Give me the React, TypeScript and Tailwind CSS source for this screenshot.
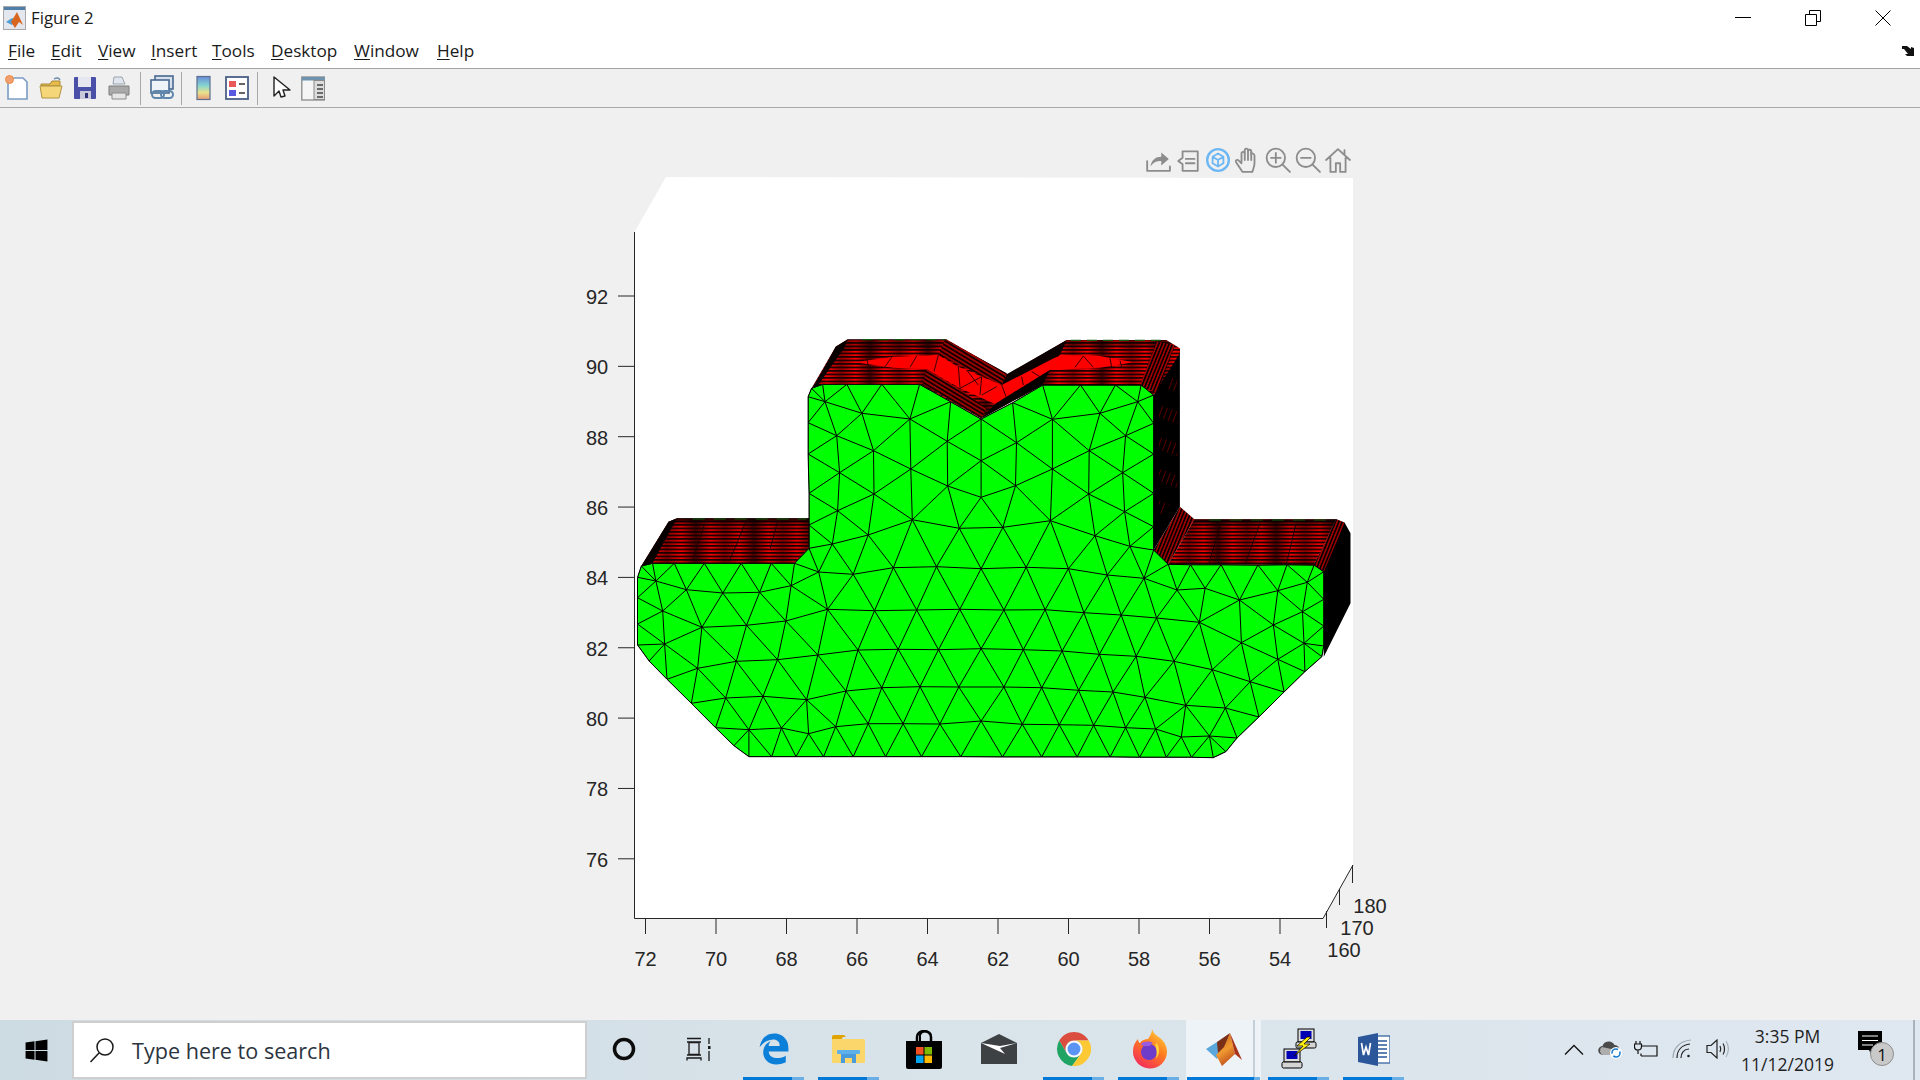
import React from "react";
import { FaEdgeLegacy, FaWindows } from "react-icons/fa";

type Pt = [number, number];
const P = (u: number, v: number): Pt => [620 + u / 2.063, 480 + v / 3];
const Z = (x: number, y: number): Pt => [810 + x / 3, 330 + y / 3];
const str = (a: Pt[]) => a.map((p) => `${p[0].toFixed(1)},${p[1].toFixed(1)}`).join(" ");
const U = (a: number[][]) => a.map(([u, v]) => P(u, v));
const ZZ = (a: number[][]) => a.map(([u, v]) => Z(u, v));

const outlineRaw = [
  [388, -250], [395, -275], [418, -287], [468, -287], [540, -287], [618, -287], [682, -235], [745, -183], [810, -232], [872, -285], [950, -285], [1022, -285], [1075, -285], [1101, -255],
  [1101, -170], [1101, -78], [1101, 40], [1101, 140], [1101, 210], [1131, 253], [1177, 254], [1240, 254], [1316, 255], [1376, 254], [1432, 255], [1452, 275], [1452, 358], [1452, 438], [1452, 498], [1448, 530],
  [1413, 575], [1370, 636], [1318, 711], [1273, 774], [1250, 815], [1224, 833], [1179, 832], [1127, 832], [1072, 832], [1011, 831], [943, 831], [870, 831], [789, 831], [703, 830], [622, 830], [548, 830], [481, 830], [420, 830], [363, 830], [313, 830], [266, 830],
  [235, 797], [197, 743], [147, 670], [97, 598], [60, 543], [36, 495], [36, 432], [36, 353], [36, 292], [44, 258], [67, 250], [112, 250], [174, 250], [250, 250], [312, 250], [360, 250], [390, 205], [390, 135], [390, 40], [388, -78], [388, -172],
];
const interiorRaw = [
  [266, 749], [333, 744], [389, 761], [445, 740], [512, 731], [584, 731], [660, 732], [745, 723], [830, 733], [906, 734], [977, 736], [1043, 743], [1105, 747], [1158, 771], [1216, 768],
  [218, 654], [295, 649], [385, 659], [466, 633], [540, 623], [619, 620], [699, 621], [792, 621], [870, 623], [946, 631], [1017, 636], [1083, 652], [1167, 676], [1249, 684],
  [160, 565], [240, 544], [325, 539], [408, 525], [491, 510], [574, 508], [657, 509], [745, 506], [832, 509], [912, 513], [989, 523], [1065, 529], [1143, 544], [1222, 569], [1300, 605], [1357, 538], [1411, 490],
  [92, 492], [169, 442], [261, 436], [342, 423], [428, 388], [525, 392], [612, 390], [701, 388], [792, 390], [877, 389], [957, 398], [1034, 405], [1107, 414], [1195, 427], [1282, 488], [1348, 435], [1408, 395],
  [88, 393], [74, 303], [137, 329], [212, 339], [288, 337], [353, 317], [410, 276], [481, 283], [564, 263], [653, 260], [745, 266], [838, 262], [925, 266], [1005, 285], [1081, 295], [1149, 330], [1207, 325], [1278, 360], [1357, 332], [1418, 307],
  [438, 192], [512, 165], [603, 119], [700, 145], [790, 142], [888, 122], [980, 167], [1052, 199],
  [449, 92], [524, 42], [676, 18], [745, 52], [816, 17], [967, 42], [1041, 95],
  [453, -22], [600, -33], [745, -58], [892, -33], [1037, -22],
  [523, -88], [675, -116], [818, -112], [968, -88],
  [447, -133], [1043, -133], [598, -183], [892, -182], [499, -200], [990, -200], [423, -235], [1068, -235],
];
const outline = U(outlineRaw);

function inPoly(p: Pt, poly: Pt[]) {
  let c = false;
  for (let i = 0, j = poly.length - 1; i < poly.length; j = i++) {
    const [xi, yi] = poly[i];
    const [xj, yj] = poly[j];
    if (yi > p[1] !== yj > p[1] && p[0] < ((xj - xi) * (p[1] - yi)) / (yj - yi) + xi) c = !c;
  }
  return c;
}

function meshPath() {
  const pts: Pt[] = [...outline, ...U(interiorRaw)];
  const n = pts.length;
  const all: Pt[] = [...pts, [-5000, -5000], [8000, -5000], [1000, 9000]];
  let tris: number[][] = [[n, n + 1, n + 2]];
  const inCirc = (t: number[], p: Pt) => {
    const [a, b, c] = t.map((i) => all[i]);
    const d = 2 * (a[0] * (b[1] - c[1]) + b[0] * (c[1] - a[1]) + c[0] * (a[1] - b[1]));
    if (Math.abs(d) < 1e-9) return false;
    const a2 = a[0] * a[0] + a[1] * a[1];
    const b2 = b[0] * b[0] + b[1] * b[1];
    const c2 = c[0] * c[0] + c[1] * c[1];
    const x = (a2 * (b[1] - c[1]) + b2 * (c[1] - a[1]) + c2 * (a[1] - b[1])) / d;
    const y = (a2 * (c[0] - b[0]) + b2 * (a[0] - c[0]) + c2 * (b[0] - a[0])) / d;
    return (p[0] - x) ** 2 + (p[1] - y) ** 2 < (a[0] - x) ** 2 + (a[1] - y) ** 2;
  };
  for (let i = 0; i < n; i++) {
    const bad = tris.filter((t) => inCirc(t, all[i]));
    const count = new Map<string, number>();
    bad.forEach((t) =>
      [[t[0], t[1]], [t[1], t[2]], [t[2], t[0]]].forEach(([a, b]) => {
        const k = a < b ? `${a}_${b}` : `${b}_${a}`;
        count.set(k, (count.get(k) || 0) + 1);
      })
    );
    tris = tris.filter((t) => !bad.includes(t));
    count.forEach((v, k) => {
      if (v === 1) {
        const [a, b] = k.split("_").map(Number);
        tris.push([a, b, i]);
      }
    });
  }
  const edges = new Set<string>();
  tris.forEach((t) => {
    if (t.some((i) => i >= n)) return;
    const c: Pt = [(all[t[0]][0] + all[t[1]][0] + all[t[2]][0]) / 3, (all[t[0]][1] + all[t[1]][1] + all[t[2]][1]) / 3];
    if (!inPoly(c, outline)) return;
    [[t[0], t[1]], [t[1], t[2]], [t[2], t[0]]].forEach(([a, b]) => edges.add(a < b ? `${a}_${b}` : `${b}_${a}`));
  });
  let d = "";
  edges.forEach((k) => {
    const [a, b] = k.split("_").map(Number);
    d += `M${all[a][0].toFixed(1)} ${all[a][1].toFixed(1)}L${all[b][0].toFixed(1)} ${all[b][1].toFixed(1)}`;
  });
  return d;
}
const MESH = meshPath();

const redLines = [
  [170, 85, 175, 108], [225, 110, 245, 82], [300, 112, 320, 78], [385, 75, 372, 125], [450, 175, 515, 140], [445, 110, 450, 172], [515, 140, 510, 195], [470, 120, 505, 165], [515, 195, 560, 170],
  [575, 165, 590, 205], [635, 140, 640, 165], [665, 125, 690, 140], [795, 112, 820, 78], [820, 78, 850, 112], [900, 85, 905, 112], [930, 92, 935, 112],
];

const wingLines = [
  [175, 130, 150, 240], [260, 125, 225, 245], [325, 125, 310, 205], [1240, 130, 1215, 250], [1320, 130, 1290, 250], [1395, 130, 1375, 250],
];

function Plot() {
  const yt = [92, 90, 88, 86, 84, 82, 80, 78, 76];
  const xt = [72, 70, 68, 66, 64, 62, 60, 58, 56, 54];
  return (
    <svg viewBox="0 108 1920 912" className="block w-full h-full font-['Liberation_Sans']">
      <defs>
        <linearGradient id="rg" x1="0" x2="1" y1="0" y2="0">
          <stop offset="0" stopColor="#500000" />
          <stop offset="0.25" stopColor="#ff0000" />
          <stop offset="0.5" stopColor="#900000" />
          <stop offset="0.75" stopColor="#ff0000" />
          <stop offset="1" stopColor="#500000" />
        </linearGradient>
        <linearGradient id="shade" x1="0" x2="0" y1="0" y2="1">
          <stop offset="0" stopColor="#000" stopOpacity="0.9" />
          <stop offset="0.14" stopColor="#000" stopOpacity="0.15" />
          <stop offset="0.75" stopColor="#000" stopOpacity="0" />
          <stop offset="1" stopColor="#000" stopOpacity="0.25" />
        </linearGradient>
        <pattern id="hs" width="58" height="3.5" patternUnits="userSpaceOnUse">
          <rect width="58" height="3.5" fill="#100000" />
          <rect y="0.700" width="58" height="1.900" fill="url(#rg)" />
        </pattern>
        <pattern id="ds" width="62" height="3.6" patternUnits="userSpaceOnUse" patternTransform="rotate(31)">
          <rect width="62" height="3.6" fill="#120000" />
          <rect y="1" width="62" height="1.5" fill="#b80000" />
        </pattern>
        <pattern id="dr" width="62" height="3.2" patternUnits="userSpaceOnUse" patternTransform="rotate(-68)">
          <rect width="62" height="3.2" fill="#060000" />
          <rect y="1" width="62" height="1.3" fill="#c00000" />
        </pattern>
        <pattern id="dk" width="30" height="5" patternUnits="userSpaceOnUse" patternTransform="rotate(-70)">
          <rect width="30" height="5" fill="#000" />
          <rect x="4" y="1" width="12" height="1" fill="#5a0000" />
        </pattern>
        <clipPath id="oc">
          <polygon points={str(outline)} />
        </clipPath>
      </defs>

      <polygon points="634.5,232 666,177 1353,178 1353,865 1323,919 634.5,919" fill="#ffffff" />

      <polyline points="634.5,232 634.5,918.5 1323,918.5 1353,865" fill="none" stroke="#262626" strokeWidth="1" />
      {yt.map((t, i) => (
        <g key={t}>
          <line x1="618" x2="634.5" y1={296 + i * 70.35} y2={296 + i * 70.35} stroke="#262626" strokeWidth="1" />
          <text x="597" y={297 + i * 70.35} textAnchor="middle" dominantBaseline="central" className="text-[20px] fill-[#262626]">{t}</text>
        </g>
      ))}
      {xt.map((t, i) => (
        <g key={t}>
          <line x1={645.5 + i * 70.5} x2={645.5 + i * 70.5} y1="918" y2="934" stroke="#262626" strokeWidth="1" />
          <text x={645.5 + i * 70.5} y="959" textAnchor="middle" dominantBaseline="central" className="text-[20px] fill-[#262626]">{t}</text>
        </g>
      ))}
      <path d="M1326.5 911V928M1339.5 889V905M1352.5 865V883" stroke="#262626" strokeWidth="1" />
      <text x="1370" y="906" textAnchor="middle" dominantBaseline="central" className="text-[20px] fill-[#262626]">180</text>
      <text x="1357" y="928" textAnchor="middle" dominantBaseline="central" className="text-[20px] fill-[#262626]">170</text>
      <text x="1344" y="950" textAnchor="middle" dominantBaseline="central" className="text-[20px] fill-[#262626]">160</text>

      {/* back walls */}
      <polygon points={str(U([[1101, -255], [1155, -395], [1155, 80], [1101, 210]]))} fill="#000" />
      <polygon points={str(U([[1112, -240], [1150, -340], [1150, 40], [1112, 120]]))} fill="url(#dk)" />
      <polygon points={str(U([[1432, 255], [1478, 118], [1495, 128], [1507, 160], [1507, 370], [1452, 530], [1452, 275]]))} fill="#000" />

      {/* top band */}
      <polygon points={str(U([[388, -250], [395, -275], [445, -400], [470, -422], [673, -422], [800, -317], [922, -420], [1127, -420], [1155, -395], [1155, -380], [1101, -255], [1075, -285], [872, -285], [745, -185], [618, -287], [418, -287]]))} fill="url(#hs)" />
      <polygon points={str(U([[445, -400], [470, -422], [673, -422], [700, -400], [445, -385]]))} fill="#000" opacity="0.3" />
      <polygon points={str(U([[922, -420], [1127, -420], [1150, -395], [900, -400]]))} fill="#000" opacity="0.3" />
      <polygon points={str(U([[388, -250], [445, -400], [470, -422], [462, -395], [410, -287]]))} fill="#080000" />
      <polygon points={str(ZZ([[135, 97], [250, 80], [385, 75], [440, 108], [575, 165], [695, 98], [755, 75], [870, 78], [970, 97], [870, 113], [720, 120], [555, 222], [450, 175], [350, 118], [250, 113]]))} fill="#ff0000" />
      {redLines.map((l, i) => {
        const a = Z(l[0], l[1]);
        const b = Z(l[2], l[3]);
        return <line key={i} x1={a[0]} y1={a[1]} x2={b[0]} y2={b[1]} stroke="#200000" strokeWidth="0.9" />;
      })}
      <polygon points={str(ZZ([[405, 28], [590, 130], [575, 165], [385, 75]]))} fill="url(#ds)" />
      <polygon points={str(ZZ([[590, 133], [770, 30], [750, 75], [575, 165]]))} fill="#0a0000" />
      <polygon points={str(ZZ([[338, 162], [350, 118], [450, 178], [530, 235], [515, 265]]))} fill="url(#ds)" />
      <polygon points={str(ZZ([[515, 265], [555, 222], [720, 120], [697, 165]]))} fill="#050000" />
      <polygon points={str(ZZ([[1040, 35], [1095, 45], [1040, 190], [990, 165]]))} fill="url(#dr)" />
      <path d={`M${P(500, -421).join(" ")}L${P(670, -421).join(" ")}M${P(930, -419).join(" ")}L${P(1120, -419).join(" ")}`} stroke="#0f5a0f" strokeWidth="1.2" strokeDasharray="10 6" />

      {/* wings */}
      <polygon points={str(U([[44, 258], [100, 125], [118, 115], [390, 115], [390, 205], [360, 250]]))} fill="url(#hs)" />
      <polygon points={str(U([[44, 258], [100, 125], [118, 115], [390, 115], [390, 205], [360, 250]]))} fill="url(#shade)" />
      <polygon points={str(U([[44, 258], [100, 125], [118, 115], [112, 130], [67, 250]]))} fill="#070000" />
      <polygon points={str(U([[1131, 253], [1185, 118], [1478, 118], [1432, 255]]))} fill="url(#hs)" />
      <polygon points={str(U([[1131, 253], [1185, 118], [1478, 118], [1432, 255]]))} fill="url(#shade)" />
      <polygon points={str(U([[1101, 210], [1155, 80], [1185, 118], [1131, 253]]))} fill="url(#dr)" />
      <polygon points={str(U([[1432, 255], [1478, 118], [1495, 128], [1452, 275]]))} fill="url(#dr)" />
      {wingLines.map((l, i) => {
        const a = P(l[0], l[1]);
        const b = P(l[2], l[3]);
        return <line key={i} x1={a[0]} y1={a[1]} x2={b[0]} y2={b[1]} stroke="#200000" strokeWidth="0.9" />;
      })}
      <path d={`M${P(150, 117).join(" ")}L${P(385, 117).join(" ")}M${P(1215, 120).join(" ")}L${P(1470, 120).join(" ")}`} stroke="#0f5a0f" strokeWidth="1" strokeDasharray="12 9" />

      {/* front face */}
      <polygon points={str(outline)} fill="#00ff00" stroke="#000" strokeWidth="1" />
      <path d={MESH} clipPath="url(#oc)" fill="none" stroke="#000" strokeWidth="1" />
    </svg>
  );
}

const FigBtn = ({ children }: { children: React.ReactNode }) => (
  <svg viewBox="0 0 24 24" width="26" height="26" fill="none" stroke="#8c8c8c" strokeWidth="1.7" strokeLinecap="round" strokeLinejoin="round" className="shrink-0 w-[26px] h-[26px]">
    {children}
  </svg>
);

function FigureTools() {
  return (
    <div className="absolute left-[1145px] top-[39px] flex gap-[4px]">
      <FigBtn>
        <path d="M2 13v9h21v-4" />
        <path d="M5 18c1-6 5-9 10-9V5l7 6-7 6v-4c-4 0-7 1-10 5z" fill="#8c8c8c" stroke="none" />
      </FigBtn>
      <FigBtn>
        <path d="M7 4h14v18H7v-6l-4-3 4-3z" />
        <path d="M10 11h8M10 15h8" />
      </FigBtn>
      <FigBtn>
        <circle cx="12" cy="12" r="10" stroke="#6db8f4" strokeWidth="2.2" />
        <path d="M12 6l5 3v6l-5 3-5-3V9zM7 9l5 3 5-3M12 12v6" stroke="#6db8f4" />
      </FigBtn>
      <FigBtn>
        <path d="M7 23l-6-9c-1-2 1-3 3-1l2 2V6c0-2 3-2 3 0V3c0-2 3-2 3 0v1c0-2 3-2 3 0v3c0-2 3-1 3 1v7c0 3-1 5-2 8z" />
        <path d="M9 6v6M12 4v8M15 5v7" />
      </FigBtn>
      <FigBtn>
        <circle cx="10" cy="10" r="8.5" />
        <path d="M10 5.500v9M5.500 10h9M16 16l7 7" />
      </FigBtn>
      <FigBtn>
        <circle cx="10" cy="10" r="8.5" />
        <path d="M5.500 10h9M16 16l7 7" />
      </FigBtn>
      <FigBtn>
        <path d="M1 12L12 2l11 10M5 10v13h5v-8h4v8h5V10M18 3v4" />
      </FigBtn>
    </div>
  );
}

function Title() {
  return (
    <div className="flex items-center h-[34px] bg-white pl-[3px] pt-px font-['Open_Sans']">
      <svg viewBox="0 0 23 24" width="23" height="24" className="shrink-0">
        <rect x="0.500" y="0.500" width="22" height="23" fill="#e4e8ee" stroke="#a8a8a8" />
        <rect x="1" y="1" width="21" height="3" fill="#4f7ea8" />
        <polygon points="3,16 9,12 12,14 9,19" fill="#4f9ed4" />
        <polygon points="14,6 20,19 16,16 12,22 8,16" fill="#d9661f" />
      </svg>
      <span className="ml-[5px] text-[16.800px] text-[#1a1a1a]">Figure 2</span>
      <div className="ml-auto flex pr-[2px]">
        <div className="w-[70px] h-[33px] flex items-center justify-center">
          <svg width="16" height="2"><rect width="16" height="1" fill="#000" /></svg>
        </div>
        <div className="w-[70px] h-[33px] flex items-center justify-center">
          <svg width="16" height="16" fill="none" stroke="#000"><path d="M.5 4.500h11v11H.5zM4.500 4V.5h11v11H12" /></svg>
        </div>
        <div className="w-[70px] h-[33px] flex items-center justify-center">
          <svg width="16" height="16" stroke="#000"><path d="M.5.5l15 15M15.500.5l-15 15" /></svg>
        </div>
      </div>
    </div>
  );
}

function Menu() {
  const items: [string, string, number][] = [
    ["F", "ile", 43], ["E", "dit", 47], ["V", "iew", 53], ["I", "nsert", 61], ["T", "ools", 59], ["D", "esktop", 83], ["W", "indow", 83], ["H", "elp", 50],
  ];
  return (
    <div className="flex items-center h-[35px] bg-white pl-[8px] border-b border-[#a3a3a3] font-['Open_Sans'] text-[17.200px] text-[#1a1a1a]">
      {items.map(([a, b, w]) => (
        <span key={b} className="block shrink-0" style={{ width: w }}>
          <span className="underline underline-offset-2">{a}</span>
          {b}
        </span>
      ))}
      <svg viewBox="0 0 12 10" width="12" height="10" className="ml-auto mr-[6px]">
        <path d="M0 0h5l4 3V1l3 1v8H5L3 8h3L2 3H0z" fill="#111" />
      </svg>
    </div>
  );
}

const Sep = ({ ml }: { ml: number }) => <div className="w-px h-[33px] bg-[#a8a8a8] shrink-0" style={{ marginLeft: ml }} />;
const TB = ({ w = 34, ml = 0, children }: { w?: number; ml?: number; children: React.ReactNode }) => (
  <div className="flex justify-center items-center shrink-0" style={{ width: w, marginLeft: ml }}>
    <svg viewBox="0 0 24 26" width="24" height="26">{children}</svg>
  </div>
);

function Toolbar() {
  return (
    <div className="flex items-center h-[39px] bg-[#f0f0f0] border-b border-[#a8a8a8]">
      <TB>
        <path d="M3 3h15l4 4v17H3z" fill="#fff" stroke="#7b9cc4" strokeWidth="1.6" />
        <circle cx="4.500" cy="4.500" r="4" fill="#f0a070" stroke="#ef8a40" />
      </TB>
      <TB>
        <path d="M2 9h9l2-3h8v5H2z" fill="#e8bb4a" stroke="#a88a3a" />
        <path d="M1 11h22l-3 12H3z" fill="#f5d77a" stroke="#b1923f" />
        <path d="M15 4c3-2 5-1 6 1" stroke="#6d8db0" strokeWidth="1.500" fill="none" />
      </TB>
      <TB>
        <rect x="1" y="2" width="22" height="22" rx="1" fill="#4a4fa8" />
        <rect x="5" y="2" width="13" height="10" fill="#e6e6f0" />
        <rect x="7" y="16" width="11" height="8" fill="#c8c8d8" />
        <rect x="12" y="18" width="3" height="5" fill="#30307a" />
      </TB>
      <TB>
        <path d="M7 2h8l3 7H6z" fill="#dfe6ee" stroke="#9aa4ad" />
        <path d="M2 11h20v9H2z" fill="#a9a9a9" stroke="#7d7d7d" />
        <path d="M5 18h14v6H5z" fill="#e5e5e5" stroke="#8a8a8a" />
      </TB>
      <Sep ml={4} />
      <TB ml={4}>
        <rect x="5" y="1" width="18" height="13" fill="#d5e0ec" stroke="#496a90" strokeWidth="1.600" />
        <rect x="1" y="5" width="18" height="13" fill="#eef3f8" stroke="#496a90" strokeWidth="1.600" />
        <rect x="2" y="16" width="12" height="7" rx="3.500" fill="none" stroke="#5f86ad" strokeWidth="2" />
        <rect x="11" y="16" width="12" height="7" rx="3.500" fill="none" stroke="#5f86ad" strokeWidth="2" />
      </TB>
      <Sep ml={2} />
      <TB ml={4}>
        <defs>
          <linearGradient id="cb" x1="0" x2="0" y1="0" y2="1">
            <stop offset="0" stopColor="#6a8cd8" />
            <stop offset="0.4" stopColor="#86d6d0" />
            <stop offset="0.7" stopColor="#e9e08a" />
            <stop offset="1" stopColor="#e89a78" />
          </linearGradient>
        </defs>
        <rect x="6" y="1.500" width="13" height="23" fill="url(#cb)" stroke="#5a6f90" strokeWidth="1.200" />
      </TB>
      <TB>
        <rect x="1" y="2" width="22" height="22" fill="#fff" stroke="#4a5f85" strokeWidth="1.800" />
        <rect x="4" y="6" width="7" height="6" fill="#e85a5a" />
        <rect x="4" y="15" width="7" height="6" fill="#5a5ae0" />
        <path d="M14 9h6M14 18h6" stroke="#333" strokeWidth="1.600" />
      </TB>
      <Sep ml={3} />
      <TB ml={6}>
        <path d="M5 2v19l5-5 2 6 4-1-2-6h7z" fill="#fff" stroke="#222" strokeWidth="1.400" strokeLinejoin="round" />
      </TB>
      <TB w={30}>
        <rect x="0.800" y="2" width="23" height="23" fill="#f5f5f5" stroke="#8a8a8a" strokeWidth="1.300" />
        <rect x="0.800" y="2" width="23" height="3.500" fill="#6f93ad" />
        <rect x="13" y="5.500" width="10.500" height="19" fill="#dcdcdc" stroke="#8a8a8a" />
        <path d="M16 10h6M16 14h6M16 18h6M16 22h6" stroke="#444" strokeWidth="1.300" />
      </TB>
    </div>
  );
}

const TaskCell = ({ bar, active, children }: { bar?: boolean; active?: boolean; children: React.ReactNode }) => (
  <div className={`relative w-[75px] h-full flex items-center justify-center pb-[2px] shrink-0 ${active ? "bg-[#eef3f7]" : ""}`}>
    {children}
    {bar && !active && (
      <div className="absolute bottom-0 left-[7px] w-[61px] h-[3px] flex">
        <div className="w-[49px] bg-[#0078d7]" />
        <div className="w-[12px] bg-[#6aaee6]" />
      </div>
    )}
    {active && (
      <>
        <div className="absolute top-0 bottom-0 left-[67px] w-[2px] bg-[#c3d0da]" />
        <div className="absolute bottom-0 left-[1px] w-[73px] h-[3px] flex">
          <div className="w-[67px] bg-[#0078d7]" />
          <div className="w-[6px] bg-[#6aaee6]" />
        </div>
      </>
    )}
  </div>
);

function Taskbar() {
  return (
    <div className="flex items-stretch h-[60px] bg-linear-to-r from-[#cddbe3] via-[#d9e3ea] to-[#dfe8f0] font-['Open_Sans']">
      <div className="w-[72px] flex items-center justify-center shrink-0">
        <FaWindows size={25} color="#000" />
      </div>
      <div className="w-[515px] h-[58px] mt-px border-2 border-[#cfcfcf] bg-white flex items-center shrink-0">
        <svg viewBox="0 0 26 26" width="26" height="26" className="ml-[15px]" fill="none" stroke="#1a1a1a" strokeWidth="1.500">
          <circle cx="16" cy="10" r="8" />
          <path d="M10 16L1.500 25" />
        </svg>
        <span className="ml-[17px] pt-[3px] text-[21.600px] text-[#2b3440]">Type here to search</span>
      </div>
      <div className="w-[74px] flex items-center justify-center shrink-0 pb-[2px]">
        <svg width="24" height="24" fill="none" stroke="#0c0c0c" strokeWidth="3.500"><circle cx="12" cy="12" r="9.500" /></svg>
      </div>
      <div className="w-[75px] flex items-center justify-center shrink-0 pb-[2px]">
        <svg width="26" height="24" fill="none" stroke="#1a1a1a" strokeWidth="1.300">
          <path d="M1 1.500h14M1 23.500V21h14v2.500M3 5.500h10v12H3zM1 5h14M1 18h14M23 1v6M23 14v10" />
          <rect x="22" y="9" width="2.500" height="3" fill="#1a1a1a" stroke="none" />
        </svg>
      </div>
      <TaskCell bar>
        <FaEdgeLegacy size={32} color="#0c7fd9" />
      </TaskCell>
      <TaskCell bar>
        <svg width="33" height="30" viewBox="0 0 33 30">
          <path d="M0 3a2 2 0 0 1 2-2h10l2 2h-3l-2 3H0z" fill="#dfa400" />
          <rect x="0" y="5" width="33" height="24" rx="1" fill="#fbd76b" />
          <path d="M9 29V20h15v9h-4v-5h-7v5z" fill="#4a9bdc" />
          <rect x="5" y="16" width="23" height="4" rx="1" fill="#5eb0ea" />
        </svg>
      </TaskCell>
      <TaskCell>
        <svg width="36" height="39" viewBox="0 0 36 39">
          <path d="M11 14V7a7 6 0 0 1 14 0v7" fill="none" stroke="#000" strokeWidth="2.500" />
          <path d="M14 14V7a5 4 0 0 1 11-2" fill="none" stroke="#000" strokeWidth="2" />
          <path d="M0 11h36v26a2 2 0 0 1-2 2H2a2 2 0 0 1-2-2z" fill="#000" />
          <rect x="10" y="17" width="7.500" height="7.500" fill="#f25022" />
          <rect x="18.500" y="17" width="7.500" height="7.500" fill="#7fba00" />
          <rect x="10" y="25.500" width="7.500" height="7.500" fill="#00a4ef" />
          <rect x="18.500" y="25.500" width="7.500" height="7.500" fill="#ffb900" />
        </svg>
      </TaskCell>
      <TaskCell>
        <svg width="36" height="30" viewBox="0 0 36 30">
          <path d="M0 9L18 0l18 9v21H0z" fill="#3d4144" />
          <path d="M0 9l24 11-5-6 17-5-17 3z" fill="#fff" />
        </svg>
      </TaskCell>
      <TaskCell bar>
        <svg width="34" height="34" viewBox="-17 -17 34 34">
          <path d="M-14.700 -8.500A17 17 0 0 1 14.700 -8.500L0 -8.500A8.500 8.500 0 0 0 -7.400 4.300Z" fill="#db4d3f" />
          <path d="M-14.700 -8.500L-7.400 4.300A8.500 8.500 0 0 0 7.400 4.300L-2 16.900A17 17 0 0 1 -14.700 -8.500Z" fill="#1fa463" />
          <path d="M14.700 -8.500L0 -8.500A8.500 8.500 0 0 1 7.400 4.300L-2 16.900A17 17 0 0 0 14.700 -8.500Z" fill="#fcc934" />
          <circle r="8" fill="#fff" />
          <circle r="6.500" fill="#5a95f5" />
        </svg>
      </TaskCell>
      <TaskCell bar>
        <svg width="36" height="40" viewBox="0 0 36 40">
          <defs>
            <linearGradient id="ff" x1="0.8" x2="0.2" y1="0" y2="1">
              <stop offset="0" stopColor="#ffd23a" />
              <stop offset="0.45" stopColor="#ff7a1f" />
              <stop offset="1" stopColor="#f3275f" />
            </linearGradient>
          </defs>
          <path d="M21 0c1 4 4 6 8 9 5 4 7 9 7 14a17 17 0 1 1-34-1c0-5 2-9 5-12 0 2 1 4 2 4 2-3 5-4 8-4 2-3 4-6 4-10z" fill="url(#ff)" />
          <circle cx="18" cy="23" r="8" fill="#6f3cc9" />
          <path d="M10 15c3-3 9-3 12-1-2 1-3 2-3 3-4 0-7 1-9-2z" fill="#9a5be0" />
          <path d="M26 14c3 5 3 11-1 16 1-5 1-9-1-14z" fill="#ffcf3a" />
        </svg>
      </TaskCell>
      <TaskCell active>
        <svg viewBox="0 0 36 33" width="36" height="33">
          <defs>
            <linearGradient id="ml" x1="0.3" x2="0.7" y1="0" y2="1">
              <stop offset="0" stopColor="#c9601e" />
              <stop offset="0.5" stopColor="#f09a30" />
              <stop offset="1" stopColor="#b8431a" />
            </linearGradient>
          </defs>
          <polygon points="0,16 11,9 18,15 11,26" fill="#5aa7dc" />
          <polygon points="11,9 24,0 18,17 12,20" fill="#7a2f18" />
          <polygon points="24,0 29,21 16,33 10,22 18,14" fill="url(#ml)" />
          <polygon points="24,0 36,27 29,21" fill="#a8341c" />
        </svg>
      </TaskCell>
      <TaskCell bar>
        <svg width="36" height="42" viewBox="0 0 36 42">
          <rect x="17" y="1" width="16" height="13" fill="#ddd" stroke="#000" />
          <rect x="19.500" y="3" width="11" height="8" fill="#0000b4" />
          <rect x="15" y="14" width="20" height="6" rx="1.500" fill="#d5d5d5" stroke="#000" />
          <rect x="3" y="21" width="16" height="13" fill="#ddd" stroke="#000" />
          <rect x="5.500" y="23" width="11" height="8" fill="#0000b4" />
          <rect x="1" y="34" width="20" height="6" rx="1.500" fill="#d5d5d5" stroke="#000" />
          <path d="M26 9l-10 9 6 0-9 10 16-12-6 0 7-7z" fill="#ffee10" stroke="#000" strokeWidth="0.700" />
        </svg>
      </TaskCell>
      <TaskCell bar>
        <svg width="32" height="33" viewBox="0 0 32 33">
          <rect x="12" y="3" width="20" height="27" fill="#fff" stroke="#2b579a" strokeWidth="1.200" />
          <path d="M18 8h11M18 12h11M18 16h11M18 20h11M18 24h11" stroke="#2b579a" strokeWidth="1.300" />
          <path d="M0 4l20-4v33L0 29z" fill="#2b579a" />
          <path d="M3.500 10l2 12 2.500-8 2.500 8 2-12" fill="none" stroke="#fff" strokeWidth="1.700" />
        </svg>
      </TaskCell>

      <div className="ml-auto flex items-center shrink-0 pb-[2px]">
        <div className="w-[36px] flex justify-center">
          <svg width="20" height="11" fill="none" stroke="#111" strokeWidth="1.300"><path d="M1 10.500l9-9 9 9" /></svg>
        </div>
        <div className="w-[36px] flex justify-center">
          <svg width="25" height="20" viewBox="0 0 25 20">
            <path d="M5 16a4.500 4.500 0 0 1-.5-9 6.500 6.500 0 0 1 12-1 5 5 0 0 1 5 6l-2 4z" fill="#4a4a4a" />
            <path d="M5 16a4.500 4.500 0 0 1-1-8l14 3-2 5z" fill="#c5c5c5" opacity="0.8" />
            <circle cx="18" cy="14" r="6" fill="#fff" />
            <circle cx="18" cy="14" r="4" fill="none" stroke="#1a7fd4" strokeWidth="1.600" strokeDasharray="9 2.500" />
          </svg>
        </div>
        <div className="w-[36px] flex justify-center">
          <svg width="24" height="18" viewBox="0 0 24 18" fill="none" stroke="#111" strokeWidth="1.200">
            <path d="M7 6h16v10H7M7 13.500V16M2 1v3M6 1v3M.5 4h7v2.500a3.500 3.500 0 0 1-7 0zM4 10v4" />
          </svg>
        </div>
        <div className="w-[36px] flex justify-center">
          <svg width="20" height="20" viewBox="0 0 20 20" fill="none" stroke="#222" strokeWidth="1.200">
            <path d="M1 19C1 9 8 2 19 1" stroke="#9aa5ae" />
            <path d="M5 19c0-8 5-13 13-14M9 19c0-5 3-9 8-9" />
            <circle cx="16.500" cy="17" r="1.300" fill="#222" stroke="none" />
          </svg>
        </div>
        <div className="w-[34px] flex justify-center">
          <svg width="23" height="20" viewBox="0 0 23 20" fill="none" stroke="#222" strokeWidth="1.200">
            <path d="M1 6.500h4L11 1v18l-6-5.500H1z" />
            <path d="M14 7c1 2 1 4 0 6M17 4.500c2 3 2 8 0 11" />
            <path d="M20 2c3 5 3 11 0 16" stroke="#a9b3bb" />
          </svg>
        </div>
        <div className="w-[107px] flex flex-col items-center text-[#1f1f1f] text-[17.500px] leading-[28px] pt-px">
          <span>3:35 PM</span>
          <span>11/12/2019</span>
        </div>
        <div className="relative w-[58px] h-[46px]">
          <svg width="25" height="24" viewBox="0 0 25 24" className="absolute left-[17px] top-[5px]">
            <path d="M0 0h24v19H16l-3 4-2-4H0z" fill="#000" />
            <path d="M4 5h16M4 9.500h16M4 14h11" stroke="#fff" strokeWidth="1.200" />
          </svg>
          <div className="absolute left-[29px] top-[16px] w-[24px] h-[24px] rounded-full bg-[#c9c9c9] border border-[#8e8e8e] flex items-center justify-center text-[17px] leading-none text-[#111]">1</div>
        </div>
        <div className="w-[21px] self-stretch flex justify-start -mb-[2px]">
          <div className="ml-[14px] w-[2px] bg-[#a9b2b9]" />
        </div>
      </div>
    </div>
  );
}

export default function App() {
  return (
    <div className="w-[1920px] h-[1080px] flex flex-col overflow-hidden bg-[#f0f0f0]">
      <Title />
      <Menu />
      <Toolbar />
      <div className="relative h-[912px] bg-[#f0f0f0]">
        <Plot />
        <FigureTools />
      </div>
      <Taskbar />
    </div>
  );
}
